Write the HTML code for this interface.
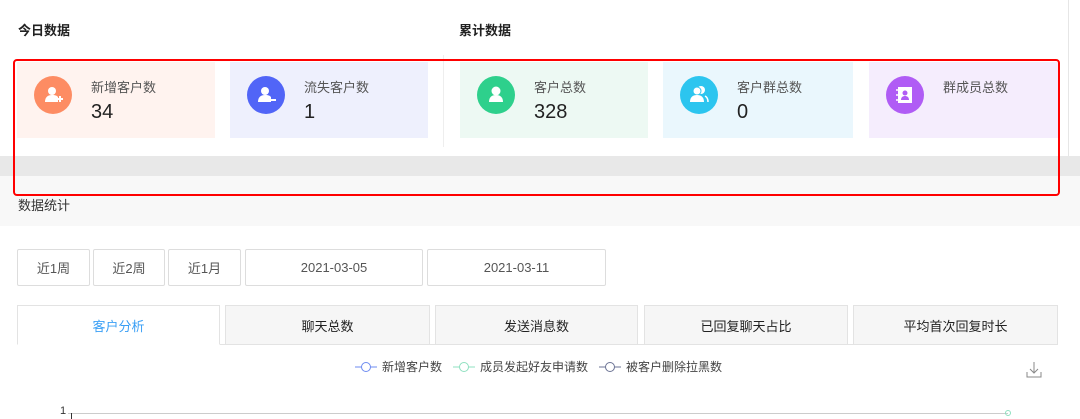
<!DOCTYPE html><html><head><meta charset="utf-8"><style>
*{margin:0;padding:0;box-sizing:border-box}
body{width:1080px;height:419px;overflow:hidden;background:#fff;font-family:"Liberation Sans","Noto Sans CJK SC",sans-serif;position:relative;color:#333}
.a{position:absolute}
.t{font-size:13px;font-weight:bold;color:#222}
.card{position:absolute;top:62px;height:76px}
.ic{position:absolute;left:17px;top:14px;width:38px;height:38px;border-radius:50%}
.lb{position:absolute;left:74px;top:15px;font-size:13px;color:#555}
.nm{position:absolute;left:74px;top:39px;font-size:20px;color:#222}
.btn{position:absolute;top:249px;height:37px;border:1px solid #ddd;border-radius:2px;font-size:13px;color:#555;display:flex;align-items:center;justify-content:center}
.tab{position:absolute;top:305px;height:40px;border:1px solid #e3e3e3;background:#f6f6f6;font-size:13px;color:#222;display:flex;align-items:center;justify-content:center}
</style></head><body>
<div class="a t" style="left:18px;top:20px">今日数据</div>
<div class="a t" style="left:459px;top:20px">累计数据</div>
<div class="a" style="left:443px;top:55px;width:1px;height:92px;background:#eee"></div>
<div class="a" style="left:1068px;top:0;width:1px;height:156px;background:#e6e6e6"></div>

<div class="card" style="left:17px;width:198px;background:#fff3ef"><div class="ic" style="background:#fd8c63"><svg width="38" height="38"><circle cx="18" cy="15" r="4" fill="#fff"/><path d="M11 26c0-5 3-7 7-7s5 1 6 2v5z" fill="#fff"/><path d="M23 23h6M26 20v6" stroke="#fff" stroke-width="2"/></svg></div><div class="lb">新增客户数</div><div class="nm">34</div></div>
<div class="card" style="left:230px;width:198px;background:#eef0fd"><div class="ic" style="background:#5165f7"><svg width="38" height="38"><circle cx="18" cy="15" r="4" fill="#fff"/><path d="M11 26c0-5 3-7 7-7s5 1 6 2v5z" fill="#fff"/><path d="M23 24h6" stroke="#fff" stroke-width="2"/></svg></div><div class="lb">流失客户数</div><div class="nm">1</div></div>
<div class="card" style="left:460px;width:188px;background:#edf9f3"><div class="ic" style="background:#2ed08c"><svg width="38" height="38"><circle cx="19" cy="15" r="4.5" fill="#fff"/><path d="M12 26c0-5 3-7 7-7s7 2 7 7z" fill="#fff"/></svg></div><div class="lb">客户总数</div><div class="nm">328</div></div>
<div class="card" style="left:663px;width:190px;background:#eaf7fd"><div class="ic" style="background:#2cc5ef"><svg width="38" height="38"><circle cx="21" cy="14" r="4" fill="#fff"/><circle cx="17" cy="15" r="4" fill="#fff" stroke="#2cc5ef"/><path d="M10 26c0-5 3-7 7-7s7 2 7 7z" fill="#fff"/><path d="M25 20c2 1 3 3 3 6" stroke="#fff" stroke-width="1.5" fill="none"/></svg></div><div class="lb">客户群总数</div><div class="nm">0</div></div>
<div class="card" style="left:869px;width:191px;background:#f5edfd"><div class="ic" style="background:#b05cf5"><svg width="38" height="38"><rect x="12" y="11" width="14" height="16" fill="#fff"/><circle cx="19" cy="17" r="2.5" fill="#b05cf5"/><path d="M15 24c0-3 2-4 4-4s4 1 4 4z" fill="#b05cf5"/><path d="M10 14h3M10 19h3M10 24h3" stroke="#fff" stroke-width="1.5"/></svg></div><div class="lb">群成员总数</div></div>

<div class="a" style="left:0;top:156px;width:1080px;height:20px;background:#e8e8e8"></div>
<div class="a" style="left:0;top:176px;width:1080px;height:50px;background:#f8f8f8"></div>
<div class="a t" style="left:18px;top:195px;font-weight:normal;color:#333">数据统计</div>
<div class="a" style="left:13px;top:59px;width:1047px;height:137px;border:2px solid #f00;border-radius:4px"></div>

<div class="btn" style="left:17px;width:73px">近1周</div>
<div class="btn" style="left:93px;width:72px">近2周</div>
<div class="btn" style="left:168px;width:73px">近1月</div>
<div class="btn" style="left:245px;width:178px">2021-03-05</div>
<div class="btn" style="left:427px;width:179px">2021-03-11</div>

<div class="tab" style="left:17px;width:203px;background:#fff;border-bottom-color:#fff;color:#3a9ff5">客户分析</div>
<div class="tab" style="left:225px;width:205px">聊天总数</div>
<div class="tab" style="left:435px;width:203px">发送消息数</div>
<div class="tab" style="left:644px;width:204px">已回复聊天占比</div>
<div class="tab" style="left:853px;width:205px">平均首次回复时长</div>
<div class="a" style="left:220px;top:344px;width:838px;height:1px;background:#e3e3e3"></div>

<div class="a" style="left:355px;top:358px;font-size:12px;color:#444;display:flex;align-items:center;gap:5px;white-space:nowrap">
<svg width="22" height="12"><path d="M0 6h22" stroke="#6d8bf0"/><circle cx="11" cy="6" r="4.5" fill="#fff" stroke="#6d8bf0"/></svg><span>新增客户数</span>
<svg width="22" height="12" style="margin-left:6px"><path d="M0 6h22" stroke="#8fe0c0"/><circle cx="11" cy="6" r="4.5" fill="#fff" stroke="#8fe0c0"/></svg><span>成员发起好友申请数</span>
<svg width="22" height="12" style="margin-left:6px"><path d="M0 6h22" stroke="#6b7394"/><circle cx="11" cy="6" r="4.5" fill="#fff" stroke="#6b7394"/></svg><span>被客户删除拉黑数</span></div>
<svg class="a" style="left:1026px;top:361px" width="16" height="18"><path d="M8 1v11M4 8l4 4 4-4M1 11v5h14v-5" stroke="#888" fill="none"/></svg>
<div class="a" style="left:60px;top:405px;font-size:11px;color:#333">1</div>
<div class="a" style="left:68px;top:413px;width:940px;height:1px;background:#ccc"></div>
<div class="a" style="left:71px;top:413px;width:1px;height:6px;background:#333"></div>
<div class="a" style="left:1005px;top:410px;width:6px;height:6px;border:1px solid #8fe0c0;border-radius:50%"></div>
</body></html>
